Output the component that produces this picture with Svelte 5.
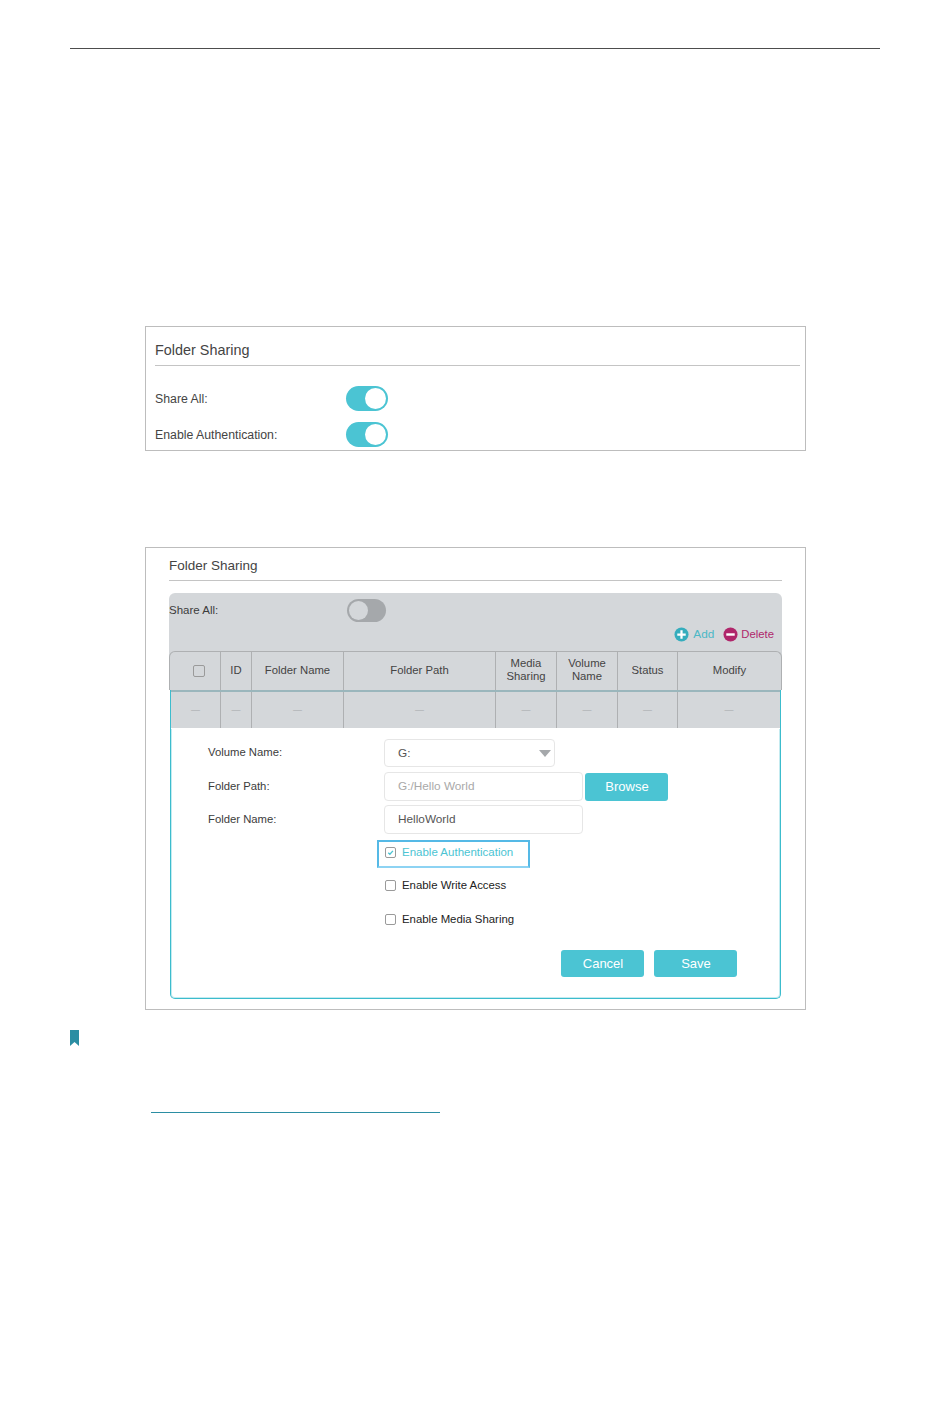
<script>
    const columns = [
        { key: 'check', width: 51 },
        { key: 'id', width: 31, label: 'ID' },
        { key: 'name', width: 92, label: 'Folder Name' },
        { key: 'path', width: 152, label: 'Folder Path' },
        { key: 'media', width: 61, label: 'Media Sharing' },
        { key: 'volume', width: 61, label: 'Volume Name' },
        { key: 'status', width: 60, label: 'Status' },
        { key: 'modify', width: 103, label: 'Modify' }
    ];
    const template = columns.map((c) => c.width + 'px').join(' ');
    // the row sits inside the teal border, so its outer columns are 1px narrower
    const rowTemplate = columns
        .map((c, i) => (i === 0 || i === columns.length - 1 ? c.width - 1 : c.width) + 'px')
        .join(' ');
</script>

<div class="page">
    <div class="top-rule"></div>

    <section class="shot first">
        <h2>Folder Sharing</h2>
        <div class="setting">
            <span class="label">Share All:</span>
            <span class="toggle on"><i></i></span>
        </div>
        <div class="setting">
            <span class="label">Enable Authentication:</span>
            <span class="toggle on"><i></i></span>
        </div>
    </section>

    <section class="shot second">
        <h2>Folder Sharing</h2>
        <div class="panel">
            <div class="panel-top">
                <span class="label">Share All:</span>
                <span class="toggle off"><i></i></span>
            </div>
            <div class="actions">
                <svg class="action-icon" viewBox="0 0 16 16">
                    <circle cx="8" cy="8" r="7.5" fill="#35adbd" />
                    <path d="M8 3.500v9M3.500 8h9" stroke="#fff" stroke-width="2.4" />
                </svg>
                <span class="add">Add</span>
                <svg class="action-icon del-icon" viewBox="0 0 16 16">
                    <circle cx="8" cy="8" r="7.5" fill="#b0266b" />
                    <path d="M3.500 8h9" stroke="#fff" stroke-width="2.6" />
                </svg>
                <span class="delete">Delete</span>
            </div>
            <div class="thead" style="grid-template-columns: {template}">
                {#each columns as col}
                    <div class="th">
                        {#if col.key === 'check'}
                            <span class="check head-check"></span>
                        {:else}
                            <span class="th-text">{col.label}</span>
                        {/if}
                    </div>
                {/each}
            </div>
        </div>

        <div class="editor">
            <div class="tbody" style="grid-template-columns: {rowTemplate}">
                {#each columns as col}
                    <div class="td"><span>—</span></div>
                {/each}
            </div>

            <div class="form">
                <div class="form-row volume">
                    <span class="form-label">Volume Name:</span>
                    <div class="select">G:<span class="caret"></span></div>
                </div>
                <div class="form-row path">
                    <span class="form-label">Folder Path:</span>
                    <div class="input disabled">G:/Hello World</div>
                    <button class="btn browse">Browse</button>
                </div>
                <div class="form-row name">
                    <span class="form-label">Folder Name:</span>
                    <div class="input">HelloWorld</div>
                </div>
                <div class="auth">
                    <span class="check checked">
                        <svg viewBox="0 0 12 12"><path d="M3 6.200l2.200 2.200L9.200 3.800" fill="none" stroke="#4cc4d3" stroke-width="1.8" /></svg>
                    </span>
                    <span>Enable Authentication</span>
                </div>
                <div class="option write">
                    <span class="check"></span>
                    <span>Enable Write Access</span>
                </div>
                <div class="option media">
                    <span class="check"></span>
                    <span>Enable Media Sharing</span>
                </div>
                <div class="buttons">
                    <button class="btn">Cancel</button>
                    <button class="btn">Save</button>
                </div>
            </div>
        </div>
    </section>

    <svg class="bookmark" viewBox="0 0 9 16">
        <path d="M0 0h9v16L4.500 12 0 16z" fill="#2b8ea3" />
    </svg>
    <div class="link-rule"></div>
</div>

<style>
    :global(body) {
        margin: 0;
        background: #fff;
    }

    .page {
        width: 950px;
        height: 1420px;
        padding-top: 48px;
        box-sizing: border-box;
        font-family: "Liberation Sans", Arial, sans-serif;
        color: #333;
        overflow: hidden;
    }

    .top-rule {
        height: 1px;
        margin: 0 70px;
        background: #4d4d4d;
    }

    .shot {
        box-sizing: border-box;
        width: 661px;
        margin-left: 145px;
        border: 1px solid #bdbdbd;
    }

    h2 {
        margin: 0;
        font-weight: normal;
        color: #444;
        border-bottom: 1px solid #c4c4c4;
    }

    .first {
        height: 125px;
        margin-top: 277px;
        padding: 0 5px 0 9px;
    }

    .first h2 {
        height: 38px;
        font-size: 14.4px;
        line-height: 46px;
    }

    .setting {
        display: flex;
        align-items: center;
        height: 25px;
        margin-bottom: 11px;
    }

    .first h2 + .setting {
        margin-top: 20px;
    }

    .setting .label {
        width: 191px;
        font-size: 12.3px;
    }

    .label {
        font-size: 11.500px;
        color: #444;
    }

    .toggle {
        display: block;
        position: relative;
        box-sizing: border-box;
        border-radius: 13px;
    }

    .toggle i {
        display: block;
        border-radius: 50%;
        background: #fff;
    }

    .toggle.on {
        width: 42px;
        height: 25px;
        background: #4bc4d3;
        padding: 2px 2px 2px 19px;
    }

    .toggle.on i {
        width: 21px;
        height: 21px;
    }

    .toggle.off {
        width: 39px;
        height: 23px;
        background: #a5a8ab;
        padding: 2px;
    }

    .toggle.off i {
        width: 19px;
        height: 19px;
        background: #d4d7da;
    }

    .second {
        height: 463px;
        margin-top: 96px;
        padding: 0 23px;
    }

    .second h2 {
        height: 32px;
        font-size: 13.500px;
        line-height: 35px;
    }

    .panel {
        margin-top: 12px;
        background: #d4d7da;
        border-radius: 6px 6px 0 0;
    }

    .panel-top {
        display: flex;
        align-items: center;
        height: 34px;
    }

    .panel-top .label {
        width: 178px;
        color: #3c3c3c;
    }

    .actions {
        display: flex;
        align-items: center;
        justify-content: flex-end;
        height: 14px;
        margin-bottom: 10px;
        padding-right: 8px;
        font-size: 11.300px;
    }

    .action-icon {
        width: 15px;
        height: 15px;
        margin-right: 4px;
    }

    .del-icon {
        margin: 0 3px 0 9px;
    }

    .add {
        font-size: 11.800px;
        color: #4bb8c6;
    }

    .delete {
        color: #b0266b;
    }

    .thead,
    .tbody {
        display: grid;
        font-size: 11.300px;
    }

    .thead {
        box-sizing: border-box;
        height: 39px;
        border: 1px solid #aeb0b2;
        border-bottom: none;
        border-radius: 6px 6px 0 0;
    }

    .th,
    .td {
        display: flex;
        align-items: center;
        justify-content: center;
        text-align: center;
        border-right: 1px solid #aeb0b2;
    }

    .th:last-child,
    .td:last-child {
        border-right: none;
    }

    .th-text {
        padding-bottom: 2px;
        line-height: 13px;
        color: #444;
    }

    .editor {
        box-sizing: border-box;
        height: 309px;
        margin: 0 1px;
        border: 1px solid #3cbccd;
        border-top: none;
        border-radius: 0 0 5px 5px;
        box-shadow: inset 0 0 0 1px #c4ebf0;
    }

    .tbody {
        height: 39px;
        background: #d4d7da;
        border-top: 2px solid #9ab6bc;
        border-bottom: 1px solid #fff;
        box-sizing: border-box;
    }

    .td {
        color: #a5a8ab;
        font-size: 9px;
    }

    .form {
        position: relative;
        padding-left: 37px;
        font-size: 11.300px;
    }

    .form-row {
        display: flex;
        align-items: center;
    }

    .form-label {
        width: 176px;
        padding-bottom: 2px;
        color: #3c3c3c;
    }

    .volume {
        margin-top: 10px;
    }

    .path {
        margin-top: 5px;
    }

    .name {
        margin-top: 4px;
    }

    .select,
    .input {
        box-sizing: border-box;
        border: 1px solid #e6e6e6;
        border-radius: 4px;
        padding-left: 13px;
        background: #fff;
        color: #555;
        font-size: 11.800px;
    }

    .select {
        position: relative;
        width: 171px;
        height: 28px;
        line-height: 27px;
    }

    .caret {
        position: absolute;
        right: 3px;
        top: 10px;
        border-left: 6px solid transparent;
        border-right: 6px solid transparent;
        border-top: 7px solid #a5a8ab;
    }

    .input {
        width: 199px;
        height: 29px;
        line-height: 27px;
    }

    .disabled {
        color: #a9a9a9;
    }

    .btn {
        display: block;
        width: 83px;
        height: 27px;
        padding: 0 0 0 1px;
        border: none;
        border-radius: 3px;
        background: #4bc4d3;
        color: #fff;
        font: 13px "Liberation Sans", Arial, sans-serif;
    }

    .browse {
        height: 28px;
        margin-left: 2px;
    }

    .auth {
        box-sizing: border-box;
        display: flex;
        align-items: center;
        width: 153px;
        height: 28px;
        margin: 6px 0 0 169px;
        padding: 0 0 4px 6px;
        border: 2px solid #55b9e6;
        border-bottom-color: #8dd3f3;
        color: #4bc4d3;
        font-size: 11.500px;
    }

    .check {
        display: inline-block;
        box-sizing: border-box;
        flex: none;
        width: 11px;
        height: 11px;
        margin-right: 6px;
        border: 1px solid #9a9a9a;
        border-radius: 2px;
        background: #fff;
    }

    .check svg {
        display: block;
        width: 9px;
        height: 9px;
    }

    .head-check {
        width: 12px;
        height: 12px;
        margin: 0 0 0 7px;
        background: transparent;
    }

    .option {
        display: flex;
        align-items: center;
        margin-left: 177px;
        height: 14px;
        color: #222;
        font-size: 11.400px;
    }

    .write {
        margin-top: 10px;
    }

    .media {
        margin-top: 20px;
    }

    .buttons {
        display: flex;
        gap: 10px;
        margin: 24px 0 0 353px;
    }

    .bookmark {
        display: block;
        width: 9px;
        height: 16px;
        margin: 20px 0 0 70px;
    }

    .link-rule {
        width: 289px;
        height: 1px;
        margin: 66px 0 0 151px;
        background: #2b8ea3;
    }
</style>
